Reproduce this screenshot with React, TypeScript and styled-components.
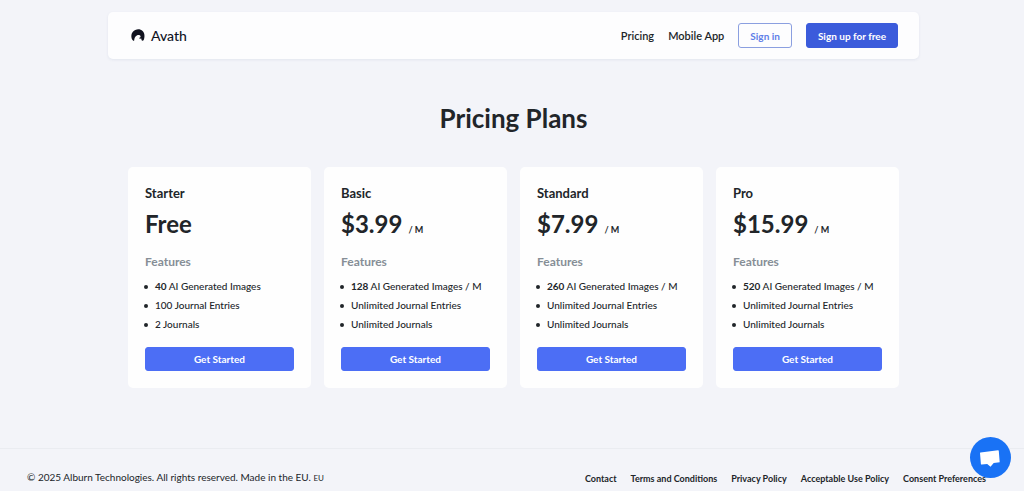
import React from "react";
import styled, { createGlobalStyle } from "styled-components";

const GlobalStyle = createGlobalStyle`
  *, *::before, *::after { box-sizing: border-box; }
  body {
    margin: 0;
    background: #f3f4f9;
    color: #212529;
    font-family: Lato, "Liberation Sans", sans-serif;
    font-size: 11px;
    line-height: 19px;
  }
`;

const Page = styled.div`
  display: flex;
  flex-direction: column;
  min-height: 100vh;
`;

const Content = styled.div`
  flex: 1;
  padding: 12px 13px 60px 16px;
`;

const Header = styled.header`
  display: flex;
  align-items: center;
  justify-content: space-between;
  max-width: 811px;
  margin: 0 auto;
  padding: 11px 21px 11px 23px;
  background: #fdfdfe;
  border-radius: 5px;
  box-shadow: 0 1px 3px rgba(40, 60, 110, 0.08);
`;

const Brand = styled.a`
  display: flex;
  align-items: center;
  gap: 6px;
  color: #10121f;
  font-size: 14px;
  font-weight: 500;
  text-decoration: none;
`;

const Nav = styled.nav`
  display: flex;
  align-items: center;
  gap: 14px;
`;

const NavLink = styled.a`
  color: #212529;
  font-weight: 600;
  text-decoration: none;
`;

const Button = styled.button<{ $kind?: "outline" | "dark"; $wide?: boolean }>`
  width: ${(p) => (p.$wide ? "100%" : "auto")};
  height: ${(p) => (p.$wide ? 24 : 25)}px;
  padding: 0 11px;
  border: 1px solid
    ${(p) => (p.$kind === "outline" ? "#8b9fe0" : p.$kind === "dark" ? "#3b5bdb" : "#4c6ef5")};
  border-radius: 3px;
  background: ${(p) =>
    p.$kind === "outline" ? "#fdfdfe" : p.$kind === "dark" ? "#3b5bdb" : "#4c6ef5"};
  color: ${(p) => (p.$kind === "outline" ? "#5f7fe8" : "#ffffff")};
  font: inherit;
  font-size: 10px;
  font-weight: 700;
  line-height: 12px;
  white-space: nowrap;
  cursor: pointer;
`;

const Main = styled.main`
  max-width: 771px;
  margin: 0 auto;
`;

const Title = styled.h1`
  margin: 42px 0 32px;
  font-size: 26px;
  font-weight: 700;
  line-height: 34px;
  text-align: center;
`;

const Plans = styled.div`
  display: grid;
  grid-template-columns: repeat(auto-fit, minmax(180px, 1fr));
  gap: 13px;
`;

const Card = styled.section`
  padding: 16px 17px 17px;
  background: #fefefe;
  border-radius: 5px;
`;

const PlanName = styled.h2`
  margin: 0;
  font-size: 13px;
  font-weight: 700;
  line-height: 20px;
`;

const Price = styled.p`
  display: flex;
  align-items: baseline;
  gap: 6px;
  margin: 0 0 9px;
  font-size: 24px;
  font-weight: 700;
  line-height: 41px;
`;

const Period = styled.span`
  font-size: 9px;
  line-height: 10px;
`;

const FeaturesTitle = styled.h3`
  margin: 0 0 6px;
  color: #868e96;
  font-size: 12px;
  font-weight: 700;
  line-height: 18px;
`;

const Features = styled.ul`
  margin: 0 0 13px -1px;
  padding: 0;
  list-style: none;
`;

const Feature = styled.li`
  display: flex;
  align-items: center;
  gap: 7px;
  font-size: 10px;
  font-weight: 500;
  white-space: nowrap;

  &::before {
    content: "";
    width: 4px;
    height: 4px;
    border-radius: 50%;
    background: #212529;
  }
`;

const Footer = styled.footer`
  display: flex;
  align-items: center;
  justify-content: space-between;
  padding: 19px 38px 3px 27px;
  border-top: 1px solid #eaecf1;
`;

const Copyright = styled.p`
  margin: 0;
  font-size: 10px;
`;

const Region = styled.small`
  font-size: 8px;
`;

const FooterNav = styled.nav`
  display: flex;
  gap: 14px;
`;

const FooterLink = styled.a`
  color: #212529;
  font-size: 9px;
  font-weight: 700;
  text-decoration: none;
`;

const ChatButton = styled.button`
  position: fixed;
  right: 13px;
  bottom: 13px;
  width: 41px;
  height: 41px;
  padding: 0;
  border: 0;
  border-radius: 50%;
  background: #1972f5;
  cursor: pointer;

  svg {
    display: block;
  }
`;

const plans = [
  { name: "Starter", price: "Free", paid: false, images: "40", rest: ["100 Journal Entries", "2 Journals"] },
  { name: "Basic", price: "$3.99", paid: true, images: "128", rest: ["Unlimited Journal Entries", "Unlimited Journals"] },
  { name: "Standard", price: "$7.99", paid: true, images: "260", rest: ["Unlimited Journal Entries", "Unlimited Journals"] },
  { name: "Pro", price: "$15.99", paid: true, images: "520", rest: ["Unlimited Journal Entries", "Unlimited Journals"] },
];

const footerLinks = [
  "Contact",
  "Terms and Conditions",
  "Privacy Policy",
  "Acceptable Use Policy",
  "Consent Preferences",
];

export default function App() {
  return (
    <>
      <GlobalStyle />
      <Page>
        <Content>
          <Header>
            <Brand href="#">
              <svg width="14" height="13" viewBox="0 0 14 13" aria-hidden="true">
                <path
                  d="M1.800 11.300C-.2 8.900-.1 5.200 1.900 2.800 4.200-.1 9-.6 11.600 2c2.200 2.100 2.300 5.700 1.200 8.700-.4 1.200-1.900 1.400-2.300.2-.1-.5-.1-.9-.3-1.300-.7.300-1.900.1-2.300-.6 1-.1 1.700-.6 1.700-1.500-.1-1.400-1.900-1.900-3.400-1.200C3.900 7.300 3.300 9.700 3.200 11.600 2.700 12 2.200 11.800 1.800 11.300Z"
                  fill="#10121f"
                />
              </svg>
              Avath
            </Brand>
            <Nav aria-label="Main">
              <NavLink href="#">Pricing</NavLink>
              <NavLink href="#">Mobile App</NavLink>
              <Button type="button" $kind="outline">Sign in</Button>
              <Button type="button" $kind="dark">Sign up for free</Button>
            </Nav>
          </Header>
          <Main>
            <Title>Pricing Plans</Title>
            <Plans>
              {plans.map((plan) => (
                <Card key={plan.name}>
                  <PlanName>{plan.name}</PlanName>
                  <Price>
                    {plan.price}
                    {plan.paid && <Period>/ M</Period>}
                  </Price>
                  <FeaturesTitle>Features</FeaturesTitle>
                  <Features>
                    <Feature>
                      <span>
                        <b>{plan.images}</b> AI Generated Images{plan.paid && " / M"}
                      </span>
                    </Feature>
                    {plan.rest.map((text) => (
                      <Feature key={text}>{text}</Feature>
                    ))}
                  </Features>
                  <Button type="button" $wide>Get Started</Button>
                </Card>
              ))}
            </Plans>
          </Main>
        </Content>
        <Footer>
          <Copyright>
            © 2025 Alburn Technologies. All rights reserved. Made in the EU. <Region>EU</Region>
          </Copyright>
          <FooterNav aria-label="Legal">
            {footerLinks.map((label) => (
              <FooterLink href="#" key={label}>{label}</FooterLink>
            ))}
          </FooterNav>
        </Footer>
      </Page>
      <ChatButton type="button" aria-label="Open chat">
        <svg width="41" height="41" viewBox="0 0 41 41" aria-hidden="true">
          <path
            d="M10.500 15.400 28 13.300Q28.700 13.200 28.800 13.900L29.700 25.300 23.700 26.100 20.500 29.800 17.200 26.900 11.700 27.500Q11 27.600 10.900 26.900L10 16.100Q9.900 15.500 10.500 15.400Z"
            fill="#fff"
          />
        </svg>
      </ChatButton>
    </>
  );
}
